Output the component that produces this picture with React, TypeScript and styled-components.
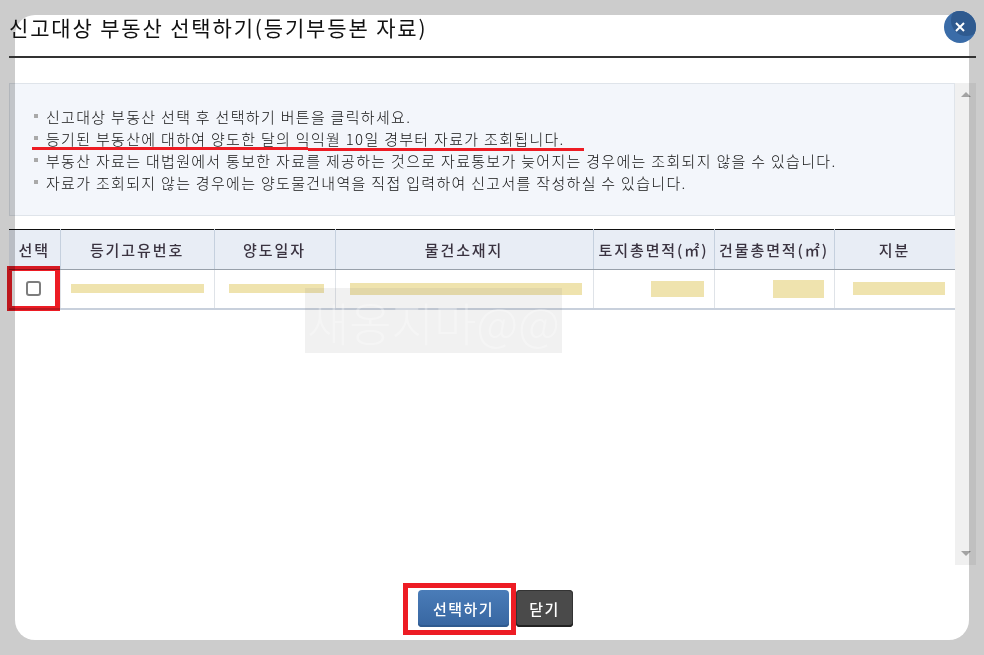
import styled, { createGlobalStyle } from "styled-components";

const GlobalStyle = createGlobalStyle`
  html, body {
    margin: 0;
    padding: 0;
    background: #cccccc;
    font-family: "Noto Sans CJK KR", "Liberation Sans", sans-serif;
  }
`;

const Page = styled.div`
  width: 984px;
  height: 655px;
  padding: 15px;
  box-sizing: border-box;
  overflow: hidden;
  background: #cccccc;
`;

const Dialog = styled.div`
  position: relative;
  width: 954px;
  height: 625px;
  display: flex;
  flex-direction: column;
  background: #ffffff;
  border-radius: 20px;
`;

const Header = styled.div`
  height: 41px;
  margin: 0 -7px 0 -6px;
  border-bottom: 2px solid #333333;
  display: flex;
  align-items: flex-start;
`;

const Title = styled.h1`
  margin: 0;
  font-size: 21px;
  line-height: 25px;
  font-weight: 400;
  letter-spacing: 1.84px;
  color: #111111;
  white-space: nowrap;
`;

const CloseButton = styled.button`
  position: absolute;
  top: -4px;
  right: -7px;
  width: 32px;
  height: 32px;
  padding: 0;
  border: none;
  border-radius: 50%;
  overflow: hidden;
  background: #3a6ca8;
  display: flex;
  align-items: center;
  justify-content: center;
  &::before {
    content: "";
    position: absolute;
    top: -6px;
    right: -6px;
    width: 31px;
    height: 31px;
    border-radius: 50%;
    background: #2f5a8f;
  }
  svg {
    position: relative;
  }
`;

const ScrollArea = styled.div`
  margin: 25px -7px 0 -6px;
  height: 482px;
  display: flex;
  mix-blend-mode: multiply;
`;

const Content = styled.div`
  width: 946px;
  flex: none;
`;

const Scrollbar = styled.div`
  width: 21px;
  flex: none;
  background: #f0f0f0;
  display: flex;
  flex-direction: column;
  justify-content: space-between;
  align-items: center;
  padding: 9px 0 9px;
  box-sizing: border-box;
`;

const ArrowUp = styled.span`
  width: 0;
  height: 0;
  border-left: 5px solid transparent;
  border-right: 5px solid transparent;
  border-bottom: 5px solid #a3a3a3;
`;

const ArrowDown = styled.span`
  width: 0;
  height: 0;
  border-left: 5px solid transparent;
  border-right: 5px solid transparent;
  border-top: 5px solid #a3a3a3;
`;

const InfoBox = styled.ul`
  margin: 0 0 13px;
  height: 133px;
  box-sizing: border-box;
  padding: 21px 0 0 24px;
  list-style: none;
  background: #f3f6fb;
  border: 1px solid #dfe4ea;
`;

const InfoItem = styled.li`
  display: flex;
  align-items: center;
  gap: 8px;
  height: 22px;
  font-size: 15px;
  line-height: 21px;
  font-weight: 300;
  letter-spacing: 1.31px;
  color: #111111;
  white-space: nowrap;
  &::before {
    content: "";
    width: 4px;
    height: 4px;
    flex: none;
    background: #a9a9a9;
  }
`;

const Table = styled.table`
  width: 946px;
  table-layout: fixed;
  border-collapse: collapse;
  border-top: 1px solid #111111;
  border-bottom: 2px solid #c8d0dc;
`;

const HeadCell = styled.th`
  height: 39px;
  padding: 0;
  background: #e8edf5;
  border-left: 1px solid #c5d0de;
  border-bottom: 1px solid #98a0aa;
  font-size: 15px;
  font-weight: 500;
  letter-spacing: 1.9px;
  color: #3a3340;
  text-align: center;
  white-space: nowrap;
  &:first-child {
    border-left: none;
  }
  &:last-child {
    border-right: 1px solid #c5d0de;
  }
`;

const BodyCell = styled.td`
  height: 38px;
  padding: 0;
  border-left: 1px solid #dfe3e8;
  &:first-child {
    border-left: none;
  }
  &:last-child {
    border-right: 1px solid #dfe3e8;
  }
`;

const CellInner = styled.div<{ $pad: string; $end?: boolean }>`
  display: flex;
  justify-content: ${(props) => (props.$end ? "flex-end" : "flex-start")};
  padding: ${(props) => props.$pad};
`;

const Masked = styled.div<{ $w: number; $h: number }>`
  width: ${(props) => props.$w}px;
  height: ${(props) => props.$h}px;
  background: #efe3ae;
`;

const Check = styled.input`
  appearance: none;
  display: block;
  width: 15px;
  height: 15px;
  margin: 0 auto 1px;
  position: relative;
  left: -1px;
  box-sizing: border-box;
  background: #ffffff;
  border: 2px solid #7d7d7d;
  border-radius: 3px;
`;

const Footer = styled.div`
  margin-top: 25px;
  padding-left: 7px;
  display: flex;
  justify-content: center;
  gap: 7px;
`;

const PrimaryButton = styled.button`
  width: 91px;
  height: 37px;
  padding: 0;
  border: none;
  border-radius: 4px;
  background: linear-gradient(#4a7cb8, #3766a1);
  box-shadow: inset 0 -2px 0 #2f5a8f;
  color: #ffffff;
  font-family: inherit;
  font-size: 15px;
  font-weight: 500;
  letter-spacing: 1.5px;
`;

const DarkButton = styled(PrimaryButton)`
  width: 57px;
  background: #4a4a4a;
  box-shadow: inset 0 -2px 0 #222222, inset 0 0 0 1px #333333;
`;

const CheckMark = styled.div`
  position: absolute;
  left: -8px;
  top: 251px;
  width: 53px;
  height: 45px;
  box-sizing: border-box;
  border: 5px solid #ed1c24;
  mix-blend-mode: multiply;
`;

const ButtonMark = styled.div`
  position: absolute;
  left: 388px;
  top: 568px;
  width: 113px;
  height: 52px;
  box-sizing: border-box;
  border: 5px solid #ed1c24;
`;

const UnderlineLeft = styled.div`
  position: absolute;
  left: 17px;
  top: 132px;
  width: 276px;
  height: 3px;
  background: #ed1c24;
`;

const UnderlineRight = styled.div`
  position: absolute;
  left: 293px;
  top: 133px;
  width: 276px;
  height: 3px;
  background: #ed1c24;
`;

const Watermark = styled.div`
  position: absolute;
  left: 290px;
  top: 273px;
  width: 257px;
  height: 65px;
  display: flex;
  align-items: center;
  justify-content: center;
  background: rgba(120, 120, 120, 0.1);
  color: rgba(255, 255, 255, 0.3);
  font-size: 46px;
  font-weight: 300;
  white-space: nowrap;
  overflow: hidden;
`;

const infoLines = [
  "신고대상 부동산 선택 후 선택하기 버튼을 클릭하세요.",
  "등기된 부동산에 대하여 양도한 달의 익익월 10일 경부터 자료가 조회됩니다.",
  "부동산 자료는 대법원에서 통보한 자료를 제공하는 것으로 자료통보가 늦어지는 경우에는 조회되지 않을 수 있습니다.",
  "자료가 조회되지 않는 경우에는 양도물건내역을 직접 입력하여 신고서를 작성하실 수 있습니다.",
];

const columns = [
  { label: "선택", width: 51 },
  { label: "등기고유번호", width: 154 },
  { label: "양도일자", width: 121 },
  { label: "물건소재지", width: 258 },
  { label: "토지총면적(㎡)", width: 121 },
  { label: "건물총면적(㎡)", width: 120 },
  { label: "지분", width: 121 },
];

export default function App() {
  return (
    <Page>
      <GlobalStyle />
      <Dialog>
        <Header>
          <Title>신고대상 부동산 선택하기(등기부등본 자료)</Title>
        </Header>
        <CloseButton aria-label="닫기">
          <svg width="12" height="12" viewBox="0 0 12 12">
            <path d="M2 2 L10 10 M10 2 L2 10" stroke="#ffffff" strokeWidth="2" />
          </svg>
        </CloseButton>

        <ScrollArea>
          <Content>
            <InfoBox>
              {infoLines.map((line) => (
                <InfoItem key={line}>{line}</InfoItem>
              ))}
            </InfoBox>
            <Table>
              <colgroup>
                {columns.map((col) => (
                  <col key={col.label} width={col.width} />
                ))}
              </colgroup>
              <thead>
                <tr>
                  {columns.map((col) => (
                    <HeadCell key={col.label}>{col.label}</HeadCell>
                  ))}
                </tr>
              </thead>
              <tbody>
                <tr>
                  <BodyCell>
                    <Check type="checkbox" />
                  </BodyCell>
                  <BodyCell>
                    <CellInner $pad="0 0 1px 10px">
                      <Masked $w={133} $h={9} />
                    </CellInner>
                  </BodyCell>
                  <BodyCell>
                    <CellInner $pad="0 0 1px 14px">
                      <Masked $w={95} $h={9} />
                    </CellInner>
                  </BodyCell>
                  <BodyCell>
                    <CellInner $pad="0 0 1px 14px">
                      <Masked $w={232} $h={12} />
                    </CellInner>
                  </BodyCell>
                  <BodyCell>
                    <CellInner $pad="0 10px 1px 0" $end>
                      <Masked $w={53} $h={16} />
                    </CellInner>
                  </BodyCell>
                  <BodyCell>
                    <CellInner $pad="0 10px 1px 0" $end>
                      <Masked $w={51} $h={18} />
                    </CellInner>
                  </BodyCell>
                  <BodyCell>
                    <CellInner $pad="0 0 2px 18px">
                      <Masked $w={92} $h={13} />
                    </CellInner>
                  </BodyCell>
                </tr>
              </tbody>
            </Table>
          </Content>
          <Scrollbar>
            <ArrowUp />
            <ArrowDown />
          </Scrollbar>
        </ScrollArea>

        <Footer>
          <PrimaryButton>선택하기</PrimaryButton>
          <DarkButton>닫기</DarkButton>
        </Footer>

        <Watermark>새옹지마@@</Watermark>
        <CheckMark />
        <ButtonMark />
        <UnderlineLeft />
        <UnderlineRight />
      </Dialog>
    </Page>
  );
}
